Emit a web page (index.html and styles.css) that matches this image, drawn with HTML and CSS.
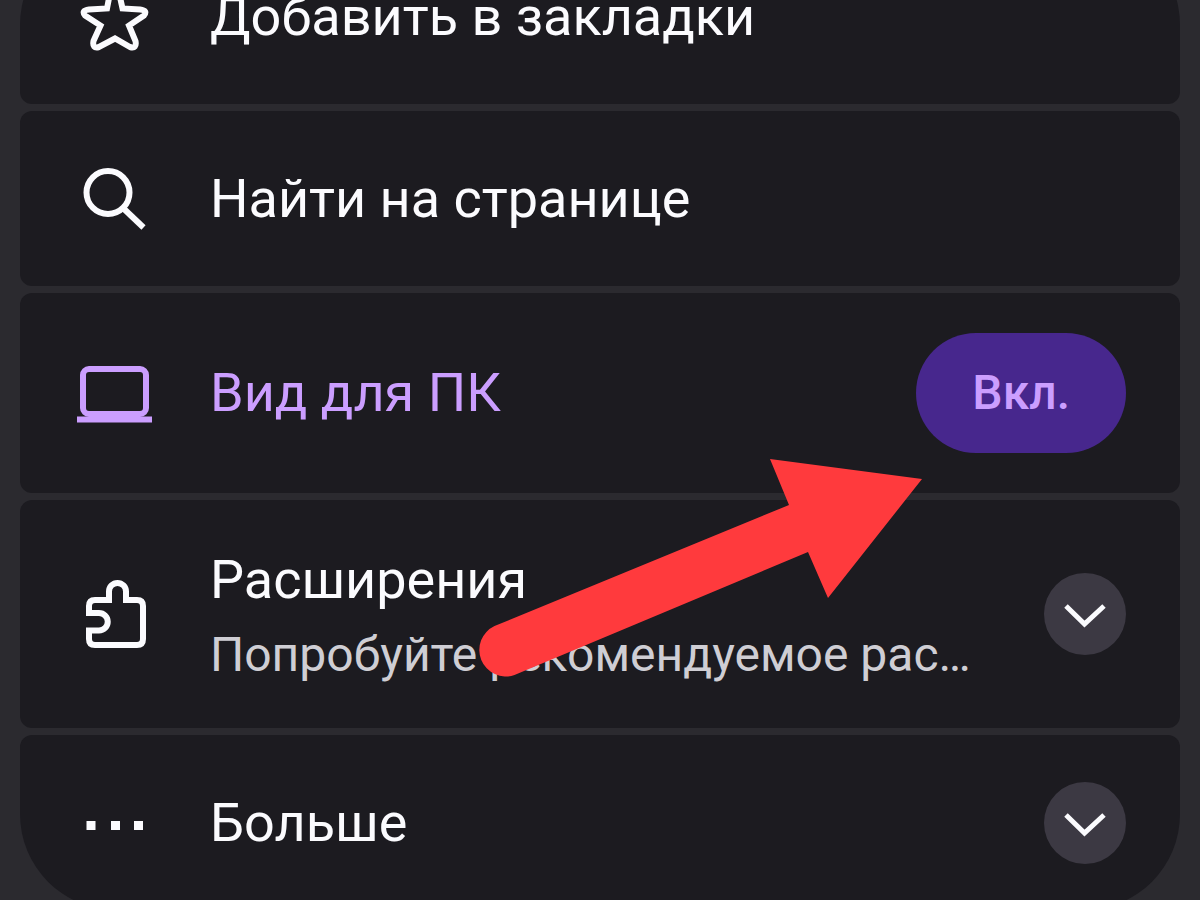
FILE: index.html
```html
<!DOCTYPE html>
<html lang="ru">
<head>
    <meta charset="UTF-8">
    <meta name="viewport" content="width=device-width, initial-scale=1.0">
    <title>Меню</title>
    <link rel="stylesheet" href="styles.css">
</head>
<body>
    <main class="menu-sheet">
        <ul class="menu">
            <li class="menu-item">
                <svg class="menu-icon" viewBox="0 0 76 76" aria-hidden="true">
                    <path d="M35 9Q38.500 3 42 9L46.500 29.500L64 30.500Q72 31.500 68 36.500L53 46.500L59.500 62Q61 70 54 68L39 59.500L23 68Q16 70 17.500 62L24.500 46.500L9 36.500Q5 31.500 13 30.500L31 29.500Z"/>
                </svg>
                <button class="menu-title" type="button">Добавить в закладки</button>
            </li>
            <li class="menu-item">
                <svg class="menu-icon" viewBox="0 0 76 76" aria-hidden="true">
                    <circle cx="32" cy="31.500" r="21.500"/>
                    <path d="M47 47L67.500 66.500"/>
                </svg>
                <button class="menu-title" type="button">Найти на странице</button>
            </li>
            <li class="menu-item menu-item-active">
                <svg class="menu-icon" viewBox="0 0 76 76" aria-hidden="true">
                    <rect x="7" y="14" width="63" height="45" rx="6"/>
                    <path d="M1 64.500H76"/>
                </svg>
                <span class="menu-title" id="desktopLabel">Вид для ПК</span>
                <button class="toggle-button" type="button" aria-pressed="true" aria-describedby="desktopLabel">Вкл.</button>
            </li>
            <li class="menu-item menu-item-tall">
                <svg class="menu-icon" viewBox="0 0 76 76" aria-hidden="true">
                    <path d="M13 37V30Q13 24 19 24H33V15.500A8.500 8.500 0 0 1 50 15.500V24H61Q67 24 67 30V63Q67 69 61 69H19Q13 69 13 63V54.500H23A8.500 8.500 0 0 0 23 37Z"/>
                </svg>
                <div class="menu-text">
                    <span class="menu-title">Расширения</span>
                    <span class="menu-subtitle">Попробуйте рекомендуемое рас…</span>
                </div>
                <button class="expand-button" type="button" aria-label="Расширения">
                    <svg class="chevron" viewBox="0 0 82 82" aria-hidden="true">
                        <path d="M22 33L40.500 51L60 33"/>
                    </svg>
                </button>
            </li>
            <li class="menu-item">
                <svg class="menu-icon" viewBox="0 0 76 76" aria-hidden="true">
                    <path class="dots" d="M10.500 36h9v9h-9zM35 36h9v9h-9zM58 36h9v9h-9z"/>
                </svg>
                <span class="menu-title">Больше</span>
                <button class="expand-button" type="button" aria-label="Больше">
                    <svg class="chevron" viewBox="0 0 82 82" aria-hidden="true">
                        <path d="M22 33L40.500 51L60 33"/>
                    </svg>
                </button>
            </li>
        </ul>

        <!-- Pointer to the toggle -->
        <svg class="pointer-arrow" viewBox="0 0 446 220" aria-hidden="true">
            <path d="M445 20L293 0L312 46L17.500 167A26.500 26.500 0 0 0 37.500 216L331 93L351 139Z"/>
        </svg>
    </main>
</body>
</html>
```

FILE: styles.css
```css
* {
    box-sizing: border-box;
}

body {
    margin: 0;
    height: 100vh;
    overflow: hidden;
    background-color: #2b2a2f;
    color: #fbfbfe;
    font-family: Roboto, sans-serif;
}

button {
    border: none;
    padding: 0;
    background: none;
    color: inherit;
    font: inherit;
    cursor: pointer;
}

/* Menu, scrolled so that its first row is partly out of view */
.menu-sheet {
    position: relative;
    margin-top: -71px;
    padding: 0 20px;
}

.menu {
    list-style: none;
    margin: 0;
    padding: 0;
    display: flex;
    flex-direction: column;
    gap: 7px;
}

.menu-item {
    display: flex;
    align-items: center;
    gap: 58px;
    min-height: 175px;
    padding: 40px 54px 40px 56px;
    border-radius: 12px;
    background-color: #1c1b20;
}

.menu-item:first-child {
    border-top-left-radius: 96px;
    border-top-right-radius: 96px;
}

.menu-item:last-child {
    border-bottom-left-radius: 96px;
    border-bottom-right-radius: 96px;
}

.menu-item-active {
    color: #cb9eff;
}

.menu-item-tall {
    min-height: 228px;
}

.menu-icon {
    flex: none;
    width: 76px;
    height: 76px;
    fill: none;
    stroke: currentColor;
    stroke-width: 6;
}

.dots {
    fill: currentColor;
    stroke: none;
}

.menu-text {
    flex: 1;
    min-width: 0;
    display: flex;
    flex-direction: column;
    gap: 17px;
}

.menu-title {
    flex: 1;
    font-size: 54px;
    line-height: 64px;
    text-align: left;
    white-space: nowrap;
}

.menu-subtitle {
    color: #cfced4;
    font-size: 48px;
    line-height: 52px;
    white-space: nowrap;
}

/* Buttons */
.toggle-button {
    padding: 32px 56px;
    border-radius: 60px;
    background-color: #47278d;
    font-size: 48px;
    font-weight: 500;
    line-height: 56px;
}

.expand-button {
    flex: none;
    width: 82px;
    height: 82px;
    border-radius: 50%;
    background-color: #3c3943;
}

.chevron {
    display: block;
    fill: none;
    stroke: currentColor;
    stroke-width: 5;
}

/* Arrow */
.pointer-arrow {
    position: absolute;
    top: 530px;
    left: 477px;
    width: 446px;
    height: 220px;
    fill: #ff3a3d;
    pointer-events: none;
}
```
